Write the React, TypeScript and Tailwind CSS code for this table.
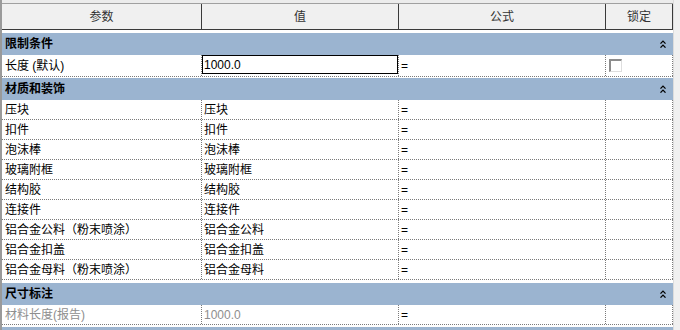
import React from "react";

const FONT = "font-['Liberation_Sans','Noto_Sans_CJK_SC',sans-serif]";

type Row = { name: string; value: string };

const materials: Row[] = [
  { name: "压块", value: "压块" },
  { name: "扣件", value: "扣件" },
  { name: "泡沫棒", value: "泡沫棒" },
  { name: "玻璃附框", value: "玻璃附框" },
  { name: "结构胶", value: "结构胶" },
  { name: "连接件", value: "连接件" },
  { name: "铝合金公料（粉末喷涂）", value: "铝合金公料" },
  { name: "铝合金扣盖", value: "铝合金扣盖" },
  { name: "铝合金母料（粉末喷涂）", value: "铝合金母料" },
];

function Collapse() {
  return (
    <svg width="6" height="8" viewBox="0 0 6 8" fill="none" stroke="#000" strokeWidth="1.3">
      <path d="M0.5 3.6 L3 1.1 L5.5 3.6" />
      <path d="M0.5 7.6 L3 5.1 L5.5 7.6" />
    </svg>
  );
}

function Section({ title }: { title: string }) {
  return (
    <div className="h-[22px] shrink-0 bg-[#9bb4d0] flex items-center justify-between pl-[3px] pr-[7px]">
      <span className="font-bold text-black leading-none">{title}</span>
      <Collapse />
    </div>
  );
}

const cell = "flex items-center border-r border-dotted border-[#7a7a7a] overflow-hidden whitespace-nowrap";

function DataRow({ name, value, muted }: Row & { muted?: boolean }) {
  const tone = muted ? "text-[#8e8e8e]" : "text-black";
  return (
    <div className="h-[20px] shrink-0 flex border-b border-dotted border-[#7a7a7a]">
      <div className={`${cell} w-[200px] pl-[3px] ${tone}`}>{name}</div>
      <div className={`${cell} w-[197px] pl-[2px] ${tone}`}>{value}</div>
      <div className={`${cell} w-[207px] pl-[2px] text-black`}>=</div>
      <div className={`${cell} w-[67px]`} />
    </div>
  );
}

export default function App() {
  return (
    <div className={`w-[680px] h-[330px] overflow-hidden bg-white flex ${FONT} text-[12px]`}>
      <div className="w-[673px] shrink-0 flex flex-col border-l-2 border-[#9a9a9a]">
        <div className="h-[3px] shrink-0 bg-[#ececec]" />
        {/* column headings */}
        <div className="h-[27px] shrink-0 flex bg-[#f0f0f0] border-t border-b border-t-[#a0a0a0] border-b-[#3a3a3a] text-[#333]">
          <div className="w-[200px] flex items-center justify-center border-r border-[#3a3a3a]">参数</div>
          <div className="w-[197px] flex items-center justify-center border-r border-[#3a3a3a]">值</div>
          <div className="w-[207px] flex items-center justify-center border-r border-[#3a3a3a]">公式</div>
          <div className="w-[67px] flex items-center justify-center border-r border-[#3a3a3a]">锁定</div>
        </div>

        <div className="h-[3px] shrink-0" />
        <Section title="限制条件" />
        <div className="h-[22px] shrink-0 flex border-b border-dotted border-[#7a7a7a]">
          <div className={`${cell} w-[200px] pl-[3px] text-black`}>长度 (默认)</div>
          <div className="w-[197px] flex items-start border-r border-dotted border-[#7a7a7a]">
            <div className="w-[196px] h-[19px] border border-black flex items-center pl-[1px] text-black">1000.0</div>
          </div>
          <div className={`${cell} w-[207px] pl-[2px] text-black`}>=</div>
          <div className={`${cell} w-[67px] pl-[3px]`}>
            <div className="w-[13px] h-[13px] bg-white border-t-2 border-l-2 border-r border-b border-t-[#8c8c8c] border-l-[#8c8c8c] border-r-[#dedede] border-b-[#dedede]" />
          </div>
        </div>

        <div className="h-[1px] shrink-0" />
        <Section title="材质和装饰" />
        {materials.map((r) => (
          <DataRow key={r.name} {...r} />
        ))}

        <div className="h-[3px] shrink-0" />
        <Section title="尺寸标注" />
        <DataRow name="材料长度(报告)" value="1000.0" muted />

        <div className="h-[2px] shrink-0" />
        <div className="h-[22px] shrink-0 bg-[#9bb4d0]" />
      </div>
      <div className="flex-1 bg-[#f0f0f0] border-l border-[#dcdcdc]" />
    </div>
  );
}
